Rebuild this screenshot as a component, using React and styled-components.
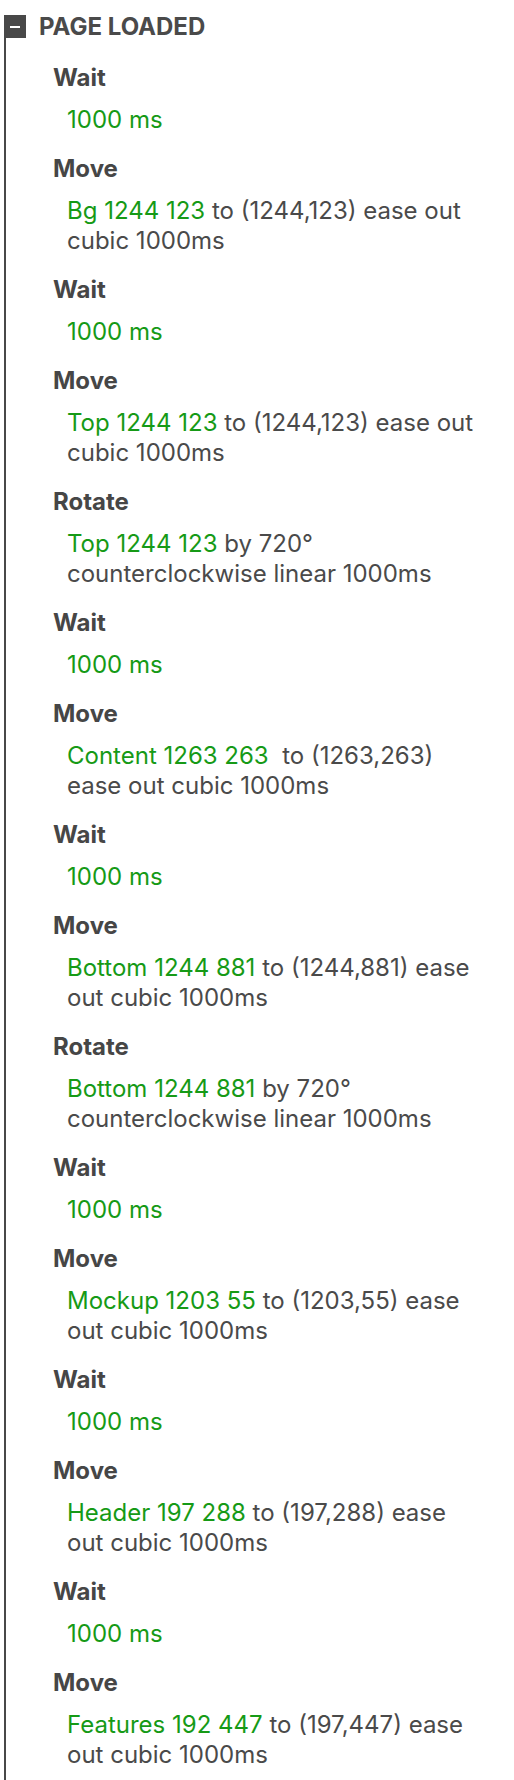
import React from 'react';
import styled, { createGlobalStyle } from 'styled-components';

const GlobalStyle = createGlobalStyle`
  body {
    margin: 0;
    background: #ffffff;
    font-family: Inter, "Noto Sans", "Liberation Sans", sans-serif;
  }
`;

const Page = styled.div`
  padding-top: 15px;
  padding-left: 4px;
  width: 476px;
`;

const Header = styled.div`
  display: flex;
  align-items: center;
  gap: 13px;
  height: 23px;
`;

const Toggle = styled.div`
  width: 22px;
  height: 23px;
  background: #484848;
  display: flex;
  align-items: center;
  justify-content: center;

  &::before {
    content: '';
    width: 10px;
    height: 2px;
    background: #ffffff;
  }
`;

const Title = styled.h2`
  margin: 0;
  font-size: 24px;
  font-weight: 700;
  color: #4a4a4a;
`;

const Steps = styled.div`
  border-left: 2px solid #484848;
  padding: 25px 0 20px 47px;
`;

const Step = styled.div`
  margin-bottom: 19.8px;
`;

const Label = styled.div`
  font-size: 24px;
  font-weight: 700;
  line-height: 30px;
  color: #464646;
  margin-bottom: 12px;
`;

const Detail = styled.div`
  padding-left: 14px;
  font-size: 24px;
  line-height: 29.5px;
  color: #4a4a4a;
`;

const Target = styled.span`
  color: #169a16;
`;

const steps = [
  { label: 'Wait', target: '1000 ms' },
  { label: 'Move', target: 'Bg 1244 123', rest: ' to (1244,123) ease out cubic 1000ms' },
  { label: 'Wait', target: '1000 ms' },
  { label: 'Move', target: 'Top 1244 123', rest: ' to (1244,123) ease out cubic 1000ms' },
  { label: 'Rotate', target: 'Top 1244 123', rest: ' by 720° counterclockwise linear 1000ms' },
  { label: 'Wait', target: '1000 ms' },
  { label: 'Move', target: 'Content 1263 263\u00a0', rest: ' to (1263,263) ease out cubic 1000ms' },
  { label: 'Wait', target: '1000 ms' },
  { label: 'Move', target: 'Bottom 1244 881', rest: ' to (1244,881) ease out cubic 1000ms' },
  { label: 'Rotate', target: 'Bottom 1244 881', rest: ' by 720° counterclockwise linear 1000ms' },
  { label: 'Wait', target: '1000 ms' },
  { label: 'Move', target: 'Mockup 1203 55', rest: ' to (1203,55) ease out cubic 1000ms' },
  { label: 'Wait', target: '1000 ms' },
  { label: 'Move', target: 'Header 197 288', rest: ' to (197,288) ease out cubic 1000ms' },
  { label: 'Wait', target: '1000 ms' },
  { label: 'Move', target: 'Features 192 447', rest: ' to (197,447) ease out cubic 1000ms' },
];

const App = () => (
  <>
    <GlobalStyle />
    <Page>
      <Header>
        <Toggle />
        <Title>PAGE LOADED</Title>
      </Header>
      <Steps>
        {steps.map((step, index) => (
          <Step key={index}>
            <Label>{step.label}</Label>
            <Detail>
              <Target>{step.target}</Target>
              {step.rest}
            </Detail>
          </Step>
        ))}
      </Steps>
    </Page>
  </>
);

export default App;
